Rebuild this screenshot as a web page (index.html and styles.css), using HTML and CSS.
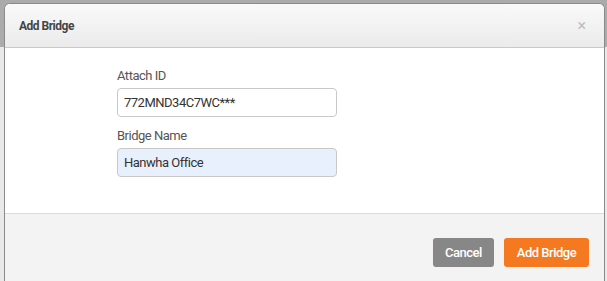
FILE: index.html
```html
<!DOCTYPE html>
<html lang="en">
<head>
    <meta charset="UTF-8">
    <title>Add Bridge</title>
    <link rel="stylesheet" href="styles.css">
</head>
<body>
    <div class="backdrop">
        <div class="modal">
            <div class="modal-header">
                <h4>Add Bridge</h4>
                <span class="close">&times;</span>
            </div>
            <div class="modal-body">
                <div class="form">
                    <label for="attachId">Attach ID</label>
                    <input type="text" id="attachId" value="772MND34C7WC***">
                    <label for="bridgeName">Bridge Name</label>
                    <input type="text" id="bridgeName" class="filled" value="Hanwha Office">
                </div>
            </div>
            <div class="modal-footer">
                <button class="btn btn-cancel">Cancel</button>
                <button class="btn btn-primary">Add Bridge</button>
            </div>
        </div>
    </div>
</body>
</html>
```

FILE: styles.css
```css
* {
    margin: 0;
    padding: 0;
    box-sizing: border-box;
}

body {
    font-family: Roboto, "Liberation Sans", sans-serif;
    background: #ebebeb;
    overflow: hidden;
}

.backdrop {
    height: 281px;
    padding: 3px 2px 0 4px;
    background: linear-gradient(to bottom, #ababab 0, #ababab 47px, #e9e9e9 47px);
}

.modal {
    height: 100%;
    background: #fff;
    border: 1px solid #8a8a8a;
    border-bottom: none;
    border-radius: 6px 6px 0 0;
    overflow: hidden;
}

.modal-header {
    height: 44px;
    display: flex;
    align-items: center;
    justify-content: space-between;
    padding: 0 18px 0 14px;
    background: linear-gradient(to bottom, #f9f9f9, #ebebeb);
    border-bottom: 1px solid #c9c9c9;
}

.modal-header h4 {
    font-size: 12px;
    font-weight: 700;
    color: #444;
    letter-spacing: -0.5px;
}

.close {
    font-size: 16px;
    color: #bdbdbd;
    line-height: 1;
}

.modal-body {
    height: 166px;
    padding: 20px 0 0 112px;
    border-bottom: 1px solid #dcdcdc;
}

.form {
    width: 220px;
    display: flex;
    flex-direction: column;
}

label {
    font-size: 13px;
    color: #555;
    line-height: 16px;
    margin-bottom: 4px;
    letter-spacing: -0.5px;
}

input {
    height: 29px;
    border: 1px solid #c8c8c8;
    border-radius: 4px;
    padding: 0 6px;
    font-family: inherit;
    font-size: 13px;
    color: #333;
    letter-spacing: -0.5px;
    margin-bottom: 11px;
    background: #fff;
}

input.filled {
    background: #e8f0fe;
}

.modal-footer {
    height: 100%;
    background: #f3f3f3;
    display: flex;
    justify-content: flex-end;
    align-items: flex-start;
    gap: 10px;
    padding: 24px 15px 0 0;
}

.btn {
    height: 29px;
    border: none;
    border-radius: 3px;
    color: #fff;
    font-family: inherit;
    font-size: 13px;
    font-weight: 500;
    letter-spacing: -0.5px;
    padding: 0;
    white-space: nowrap;
}

.btn-cancel {
    background: #878787;
    width: 61px;
}

.btn-primary {
    background: #f47920;
    width: 85px;
}
```
